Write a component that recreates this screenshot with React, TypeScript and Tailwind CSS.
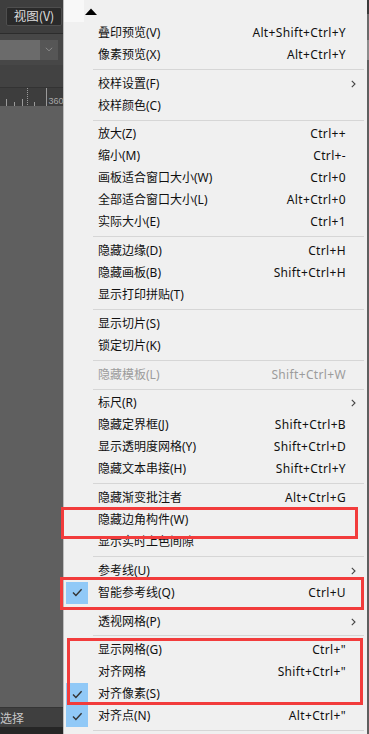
import React from "react";

type Item =
  | { type: "sep" }
  | {
      type?: "item";
      label: string;
      shortcut?: string;
      checked?: boolean;
      submenu?: boolean;
      disabled?: boolean;
    };

const items: Item[] = [
  { label: "叠印预览(V)", shortcut: "Alt+Shift+Ctrl+Y" },
  { label: "像素预览(X)", shortcut: "Alt+Ctrl+Y" },
  { type: "sep" },
  { label: "校样设置(F)", submenu: true },
  { label: "校样颜色(C)" },
  { type: "sep" },
  { label: "放大(Z)", shortcut: "Ctrl++" },
  { label: "缩小(M)", shortcut: "Ctrl+-" },
  { label: "画板适合窗口大小(W)", shortcut: "Ctrl+0" },
  { label: "全部适合窗口大小(L)", shortcut: "Alt+Ctrl+0" },
  { label: "实际大小(E)", shortcut: "Ctrl+1" },
  { type: "sep" },
  { label: "隐藏边缘(D)", shortcut: "Ctrl+H" },
  { label: "隐藏画板(B)", shortcut: "Shift+Ctrl+H" },
  { label: "显示打印拼贴(T)" },
  { type: "sep" },
  { label: "显示切片(S)" },
  { label: "锁定切片(K)" },
  { type: "sep" },
  { label: "隐藏模板(L)", shortcut: "Shift+Ctrl+W", disabled: true },
  { type: "sep" },
  { label: "标尺(R)", submenu: true },
  { label: "隐藏定界框(J)", shortcut: "Shift+Ctrl+B" },
  { label: "显示透明度网格(Y)", shortcut: "Shift+Ctrl+D" },
  { label: "隐藏文本串接(H)", shortcut: "Shift+Ctrl+Y" },
  { type: "sep" },
  { label: "隐藏渐变批注者", shortcut: "Alt+Ctrl+G" },
  { label: "隐藏边角构件(W)" },
  { label: "显示实时上色间隙" },
  { type: "sep" },
  { label: "参考线(U)", submenu: true },
  { label: "智能参考线(Q)", shortcut: "Ctrl+U", checked: true },
  { type: "sep" },
  { label: "透视网格(P)", submenu: true },
  { type: "sep" },
  { label: "显示网格(G)", shortcut: 'Ctrl+"' },
  { label: "对齐网格", shortcut: 'Shift+Ctrl+"' },
  { label: "对齐像素(S)", checked: true },
  { label: "对齐点(N)", shortcut: 'Alt+Ctrl+"', checked: true },
  { type: "sep" },
];

function Check() {
  return (
    <svg width="11" height="9" viewBox="0 0 11 9" fill="none">
      <path d="M1 4.6 L3.9 7.4 L9.6 1.2" stroke="#333" strokeWidth="1.4" />
    </svg>
  );
}

function Row({ it }: { it: Item }) {
  if (it.type === "sep") {
    return (
      <div className="h-[7px] flex items-center pl-[29px] pr-[3px]">
        <div className="h-px w-full bg-[#d6d6d6]" />
      </div>
    );
  }
  return (
    <div className="h-[22px] flex items-center pl-[2px]">
      <div
        className={
          it.checked
            ? "w-[22px] h-[22px] flex items-center justify-center bg-[#91c9f7]"
            : "w-[22px] h-[22px]"
        }
      >
        {it.checked ? <Check /> : null}
      </div>
      <div
        className={
          it.disabled
            ? "ml-[10px] flex-1 text-[12px] leading-none text-[#9c9c9c] whitespace-nowrap"
            : "ml-[10px] flex-1 text-[12px] leading-none text-[#101010] whitespace-nowrap"
        }
      >
        {it.label}
      </div>
      <div
        className={
          it.disabled
            ? "text-[12px] leading-none tracking-[0.35px] text-[#9c9c9c] whitespace-nowrap"
            : "text-[12px] leading-none tracking-[0.35px] text-[#101010] whitespace-nowrap"
        }
      >
        {it.shortcut ?? ""}
      </div>
      <div className="w-[21px] h-[22px] flex items-center pl-[5px]">
        {it.submenu ? (
          <svg width="5" height="8" viewBox="0 0 5 8" fill="none">
            <path d="M0.8 0.8 L4 4 L0.8 7.2" stroke="#444" strokeWidth="1.1" />
          </svg>
        ) : null}
      </div>
    </div>
  );
}

export default function App() {
  return (
    <div className="relative w-[369px] h-[734px] overflow-hidden flex bg-[#3c3c3c] font-['Noto_Sans','Noto_Sans_CJK_SC',sans-serif]">
      {/* left app panel */}
      <div className="w-[63px] h-full flex flex-col shrink-0">
        <div className="h-[34px] bg-[#3e3e3e] border-b border-[#2c2c2c] flex items-center pl-[6px]">
          <div className="w-[56px] h-[19px] rounded-[2px] bg-[#2a2a2a] border border-[#4e4e4e] flex items-center justify-center text-[12.5px] leading-none text-[#dcdcdc] font-['Noto_Sans_CJK_SC',sans-serif]">
            视图(V)
          </div>
        </div>
        <div className="h-[31px] bg-[#474747] flex items-center">
          <div className="w-[40px] h-[20px] bg-[#6b6b6b]" />
          <div className="w-[18px] h-[20px] bg-[#565656] flex items-center justify-center">
            <svg width="8" height="5" viewBox="0 0 8 5" fill="none">
              <path d="M0.8 0.8 L4 3.8 L7.2 0.8" stroke="#8a8a8a" strokeWidth="1" />
            </svg>
          </div>
        </div>
        <div className="h-[22px] bg-[#424242]" />
        <div className="h-[19px] bg-[#3d3d3d] border-t border-[#333]">
          <svg width="63" height="18" viewBox="0 0 63 18">
            <line x1="6.5" y1="11" x2="6.5" y2="18" stroke="#9a9a9a" />
            <line x1="14.5" y1="14" x2="14.5" y2="18" stroke="#9a9a9a" />
            <line x1="22.5" y1="11" x2="22.5" y2="18" stroke="#9a9a9a" />
            <line x1="27.5" y1="0" x2="27.5" y2="18" stroke="#9a9a9a" strokeDasharray="1 1" />
            <line x1="34.5" y1="14" x2="34.5" y2="18" stroke="#9a9a9a" />
            <line x1="46.5" y1="0" x2="46.5" y2="18" stroke="#9a9a9a" />
            <text x="48.5" y="16" fontSize="9" fill="#a8a8a8" fontFamily="Liberation Sans, sans-serif">
              360
            </text>
          </svg>
        </div>
        <div className="flex-1 bg-[#5f5f5f]" />
        <div className="h-[20px] bg-[#3f3f3f] border-t border-[#353535] flex items-center text-[12px] leading-none text-[#c8c8c8] font-['Noto_Sans_CJK_SC',sans-serif]">
          选择
        </div>
        <div className="h-[7px] bg-[#262626]" />
      </div>

      {/* menu */}
      <div className="w-[304px] h-full shrink-0 bg-[#f0f0f0] border-l border-[#bdbdbd] flex flex-col">
        <div className="h-[22px] flex">
          <div className="w-[20px] h-[22px] bg-[#f8f8f8]" />
          <div className="flex items-center pl-[1px]">
            <svg width="12" height="7" viewBox="0 0 12 7">
              <path d="M0 7 L6 0.5 L12 7 Z" fill="#000" />
            </svg>
          </div>
        </div>
        {items.map((it, i) => (
          <Row key={i} it={it} />
        ))}
      </div>

      {/* right edge */}
      <div className="flex-1 flex flex-col">
        <div className="h-[14px] bg-[#3a3a3a]" />
        <div className="h-[26px] bg-[#6a6a6a]" />
        <div className="h-[20px] bg-[#8c8c8c]" />
        <div className="flex-1 bg-[#5f5f5f]" />
      </div>

      {/* annotation boxes */}
      <div className="absolute left-[61px] top-[507px] w-[297px] h-[32px] border-[3px] border-[#f23c3c]" />
      <div className="absolute left-[60px] top-[577px] w-[304px] h-[33px] border-[3px] border-[#f23c3c]" />
      <div className="absolute left-[67px] top-[638px] w-[296px] h-[67px] border-[3px] border-[#f23c3c]" />
    </div>
  );
}
